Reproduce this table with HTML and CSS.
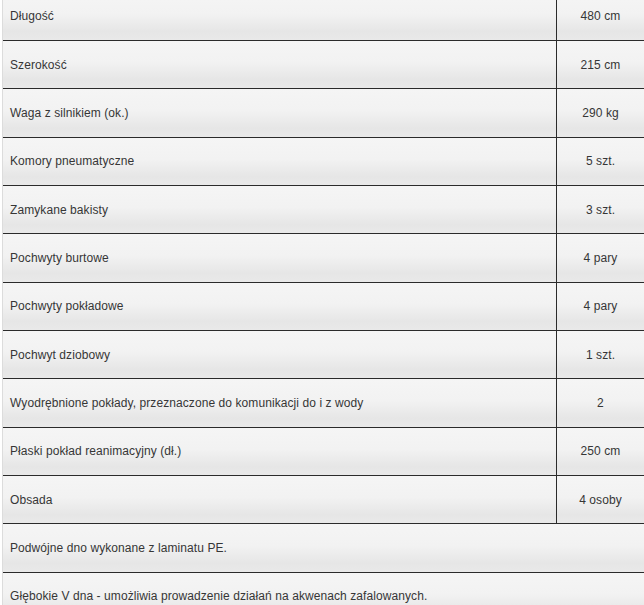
FILE: index.html
```html
<!DOCTYPE html>
<html lang="pl">
<head>
<meta charset="utf-8">
<title>Dane techniczne</title>
<link rel="stylesheet" href="styles.css">
</head>
<body>
<div class="spec">
  <div class="row"><div class="label">Długość</div><div class="value">480 cm</div></div>
  <div class="row"><div class="label">Szerokość</div><div class="value">215 cm</div></div>
  <div class="row"><div class="label">Waga z silnikiem (ok.)</div><div class="value">290 kg</div></div>
  <div class="row"><div class="label">Komory pneumatyczne</div><div class="value">5 szt.</div></div>
  <div class="row"><div class="label">Zamykane bakisty</div><div class="value">3 szt.</div></div>
  <div class="row"><div class="label">Pochwyty burtowe</div><div class="value">4 pary</div></div>
  <div class="row"><div class="label">Pochwyty pokładowe</div><div class="value">4 pary</div></div>
  <div class="row"><div class="label">Pochwyt dziobowy</div><div class="value">1 szt.</div></div>
  <div class="row"><div class="label">Wyodrębnione pokłady, przeznaczone do komunikacji do i z wody</div><div class="value">2</div></div>
  <div class="row"><div class="label">Płaski pokład reanimacyjny (dł.)</div><div class="value">250 cm</div></div>
  <div class="row"><div class="label">Obsada</div><div class="value">4 osoby</div></div>
  <div class="row"><div class="label">Podwójne dno wykonane z laminatu PE.</div></div>
  <div class="row"><div class="label">Głębokie V dna - umożliwia prowadzenie działań na akwenach zafalowanych.</div></div>
</div>
</body>
</html>
```

FILE: styles.css
```css
html, body {
  margin: 0;
  padding: 0;
  background: #ffffff;
}

body {
  font-family: "Liberation Sans", Arial, sans-serif;
  font-size: 12px;
  letter-spacing: 0.08px;
  color: #363636;
}

.spec {
  margin: -7.33px 0 0 2px;
  border-left: 1px solid #dcdcdc;
  width: 641px;
}

.row {
  display: flex;
  height: 47.333px;
  border-bottom: 1px solid #2b2b2b;
  background: linear-gradient(to bottom, #f5f5f5 0%, #f2f2f2 45%, #e6e6e6 82%, #e9e9e9 100%);
}

.label {
  flex: 1;
  display: flex;
  align-items: center;
  padding-left: 7px;
  white-space: nowrap;
}

.value {
  width: 87px;
  flex: none;
  border-left: 1px solid #2b2b2b;
  display: flex;
  align-items: center;
  justify-content: center;
}
```
